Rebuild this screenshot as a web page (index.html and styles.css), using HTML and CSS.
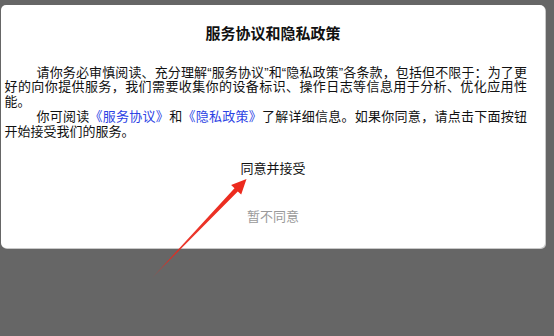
FILE: index.html
```html
<!DOCTYPE html>
<html lang="zh-CN">
<head>
<meta charset="utf-8">
<title>服务协议和隐私政策</title>
<link rel="stylesheet" href="styles.css">
</head>
<body>
<div class="dialog">
  <h1 class="title">服务协议和隐私政策</h1>
  <div class="content">
    <p class="para">请你务必审慎阅读、充分理解“服务协议”和“隐私政策”各条款，包括但不限于：为了更好的向你提供服务，我们需要收集你的设备标识、操作日志等信息用于分析、优化应用性能。</p>
    <p class="para">你可阅读<a class="link" href="#">《服务协议》</a>和<a class="link" href="#">《隐私政策》</a>了解详细信息。如果你同意，请点击下面按钮开始接受我们的服务。</p>
  </div>
  <div class="actions">
    <button class="btn btn-agree">同意并接受</button>
    <button class="btn btn-decline">暂不同意</button>
  </div>
</div>
<svg class="arrow" width="554" height="336" viewBox="0 0 554 336">
  <defs>
    <linearGradient id="fade" x1="151.5" y1="278.5" x2="236" y2="190" gradientUnits="userSpaceOnUse">
      <stop offset="0" stop-color="#e8281c" stop-opacity="0.35"/>
      <stop offset="0.2" stop-color="#e8281c" stop-opacity="0.9"/>
      <stop offset="1" stop-color="#ec2a1d"/>
    </linearGradient>
  </defs>
  <polygon points="246.5,179 231.1,185 234.5,188.2 151.5,278.5 237.8,191.4 241.2,194.6" fill="url(#fade)"/>
</svg>
</body>
</html>
```

FILE: styles.css
```css
html, body {
  margin: 0;
  padding: 0;
}

body {
  width: 554px;
  height: 336px;
  background: #666666;
  font-family: "Liberation Sans", "Noto Sans CJK SC", sans-serif;
  color: #111111;
  position: relative;
  overflow: hidden;
}

.dialog {
  margin: 5px 9px 0 1px;
  height: 243px;
  box-sizing: border-box;
  background: #ffffff;
  border-radius: 5px;
  box-shadow: 1px 1px 0 #c8c8c8;
  padding: 19px 0 12px 0;
  display: flex;
  flex-direction: column;
}

.title {
  margin: 0;
  font-size: 15px;
  line-height: 20px;
  font-weight: bold;
  text-align: center;
}

.content {
  margin-top: 21.6px;
  padding: 0 18px 0 3.5px;
  font-size: 13px;
  line-height: 14.8px;
  text-align: justify;
}

.para {
  margin: 0;
  text-indent: 32px;
}

.link {
  color: #2c42e4;
  text-decoration: none;
}

.actions {
  margin-top: 8.4px;
  display: flex;
  flex-direction: column;
  align-items: center;
  gap: 8px;
}

.btn {
  height: 40px;
  border: none;
  background: transparent;
  font-family: inherit;
  font-size: 13px;
  padding: 0 10px;
  cursor: pointer;
}

.btn-agree {
  color: #111111;
}

.btn-decline {
  color: #9a9a9a;
}

.arrow {
  position: absolute;
  left: 0;
  top: 0;
  pointer-events: none;
}
```
